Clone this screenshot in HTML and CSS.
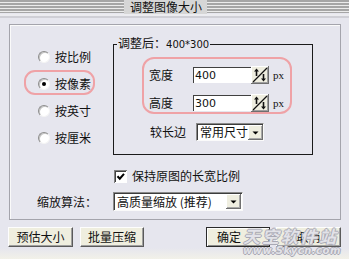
FILE: index.html
```html
<!DOCTYPE html>
<html>
<head>
<meta charset="utf-8">
<link rel="stylesheet" href="styles.css">
</head>
<body>
<div class="titlebar">
  <div class="stripes left"></div>
  <div class="title">调整图像大小</div>
  <div class="stripes right"></div>
</div>
<div class="band"></div>
<div class="group">
  <div class="units">
    <div class="radio"><span class="dot"></span>按比例</div>
    <div class="radio hl"><span class="dot on"></span>按像素</div>
    <div class="radio"><span class="dot"></span>按英寸</div>
    <div class="radio"><span class="dot"></span>按厘米</div>
  </div>
  <fieldset class="resize">
    <legend>调整后：<span class="num">400*300</span></legend>
    <div class="ring">
      <div class="field">
        <span class="lbl">宽度</span><span class="input">400</span>
        <svg class="spin" viewBox="0 0 18 18" width="18" height="18"><rect x="0" y="0" width="18" height="18" fill="#6f6f6f"/><rect x="0" y="0" width="17" height="17" fill="#fff"/><rect x="1" y="1" width="16" height="16" fill="#a0a0a0"/><rect x="1" y="1" width="15" height="15" fill="#efeee0"/><path d="M2 16L16 2" stroke="#111" stroke-width="1.3"/><path d="M5.5 10V4.5" stroke="#111" stroke-width="1.6"/><path d="M3 5.5L5.5 2.5 8 5.5z" fill="#111"/><path d="M12.5 8V13.5" stroke="#111" stroke-width="1.6"/><path d="M10 12.5L12.5 15.5 15 12.5z" fill="#111"/></svg>
        <span class="px">px</span>
      </div>
      <div class="field">
        <span class="lbl">高度</span><span class="input">300</span>
        <svg class="spin" viewBox="0 0 18 18" width="18" height="18"><rect x="0" y="0" width="18" height="18" fill="#6f6f6f"/><rect x="0" y="0" width="17" height="17" fill="#fff"/><rect x="1" y="1" width="16" height="16" fill="#a0a0a0"/><rect x="1" y="1" width="15" height="15" fill="#efeee0"/><path d="M2 16L16 2" stroke="#111" stroke-width="1.3"/><path d="M5.5 10V4.5" stroke="#111" stroke-width="1.6"/><path d="M3 5.5L5.5 2.5 8 5.5z" fill="#111"/><path d="M12.5 8V13.5" stroke="#111" stroke-width="1.6"/><path d="M10 12.5L12.5 15.5 15 12.5z" fill="#111"/></svg>
        <span class="px">px</span>
      </div>
    </div>
    <div class="field longside">
      <span class="lbl2">较长边</span>
      <div class="select small"><span class="sel-text">常用尺寸</span>
        <svg class="drop" viewBox="0 0 15 15" width="15" height="15"><rect width="15" height="15" fill="#707070"/><rect width="14" height="14" fill="#fff"/><rect x="1" y="1" width="13" height="13" fill="#a8a8a8"/><rect x="1" y="1" width="12" height="12" fill="#efeee0"/><path d="M4.5 6.5h6l-3 3z" fill="#000"/></svg>
      </div>
    </div>
  </fieldset>
  <div class="check">
    <svg class="box" viewBox="0 0 13 13" width="13" height="13"><rect width="13" height="13" fill="#fff"/><rect width="13" height="1" fill="#808080"/><rect width="1" height="13" fill="#808080"/><rect x="1" y="1" width="11" height="1" fill="#404040"/><rect x="1" y="1" width="1" height="11" fill="#404040"/><path d="M3.5 6.2l2.3 2.5L10 3.8" stroke="#000" stroke-width="2" fill="none"/></svg>
    <span>保持原图的长宽比例</span>
  </div>
  <div class="algo-label">缩放算法：</div>
  <div class="select wide"><span class="sel-text">高质量缩放 (推荐)</span>
    <svg class="drop" viewBox="0 0 15 15" width="15" height="15"><rect width="15" height="15" fill="#707070"/><rect width="14" height="14" fill="#fff"/><rect x="1" y="1" width="13" height="13" fill="#a8a8a8"/><rect x="1" y="1" width="12" height="12" fill="#efeee0"/><path d="M4.5 6.5h6l-3 3z" fill="#000"/></svg>
  </div>
</div>
<div class="actions">
  <div class="btns">
    <button class="btn w65">预估大小</button>
    <button class="btn w64">批量压缩</button>
  </div>
  <div class="btns right">
    <button class="btn w64 default"><span class="ok">确定</span></button>
    <button class="btn w65">取消</button>
  </div>
</div>
<div class="watermark">
  <div class="wm1">天空软件站</div>
  <div class="wm2">www.Skycn.com</div>
</div>
</body>
</html>
```
FILE: styles.css
```css
html, body {
  margin: 0;
  padding: 0;
}
body {
  width: 349px;
  height: 259px;
  overflow: hidden;
  position: relative;
  background: linear-gradient(to bottom, #e6e6ee 0, #e6e6ee 248px, #f2f1e8 259px);
  font-family: "Noto Sans CJK SC", "DejaVu Sans", sans-serif;
  font-size: 12px;
  color: #111;
}
.titlebar {
  display: flex;
  height: 14px;
}
.stripes {
  height: 13px;
  background: repeating-linear-gradient(to bottom, #a6a6a6 0, #a6a6a6 2px, #ececec 2px, #ececec 3px);
}
.stripes.left { width: 124px; }
.stripes.right { flex: 1; }
.title {
  background: #d6d6d6;
  padding: 0 5px 0 6px;
  height: 14px;
  line-height: 14px;
  font-size: 12px;
  color: #111;
}
.band {
  height: 2px;
  background: #ececf0;
  border-bottom: 2px solid #cfcfd6;
}
.group {
  margin: 6px 0 0 9px;
  width: 332px;
  height: 196px;
  box-sizing: border-box;
  border: 1px solid #a4a4ac;
  box-shadow: inset 1px 1px 0 #fafafa;
  padding: 10px 0 10px 0;
  display: grid;
  grid-template-columns: 103px 1fr;
  align-items: start;
}
.units {
  grid-column: 1;
  grid-row: 1;
  padding: 8px 0 0 28px;
  display: flex;
  flex-direction: column;
}
.radio {
  height: 27px;
  display: flex;
  align-items: center;
  gap: 5px;
  position: relative;
  line-height: 14px;
}
.dot {
  width: 12px;
  height: 12px;
  box-sizing: border-box;
  border-radius: 50%;
  background: #fff;
  border: 1px solid;
  border-color: #8c8c8c #f4f4f4 #f4f4f4 #8c8c8c;
  box-shadow: inset 1px 1px 0 #c4c4c4;
  position: relative;
}
.dot.on::after {
  content: "";
  position: absolute;
  left: 3px;
  top: 3px;
  width: 4px;
  height: 4px;
  border-radius: 50%;
  background: #000;
}
.radio.hl::before {
  content: "";
  position: absolute;
  left: -14px;
  top: 0;
  width: 71px;
  height: 25px;
  box-sizing: border-box;
  border: 2px solid #efa2a6;
  border-radius: 11px;
}
.resize {
  grid-column: 2;
  grid-row: 1;
  margin: 0;
  padding: 4px 0 13px 0;
  border: 1px solid #1a1a1a;
  width: 200px;
  box-sizing: border-box;
  min-width: 0;
}
.resize legend {
  padding: 0 1px;
  margin-left: 3px;
  line-height: 16px;
  font-size: 12px;
}
.num {
  font-family: "DejaVu Sans", sans-serif;
  font-size: 10px;
}
.ring {
  margin-left: 28px;
  width: 150px;
  height: 57px;
  box-sizing: border-box;
  border: 2px solid #efa2a6;
  border-radius: 12px;
  padding: 8px 0 1px 5px;
  display: flex;
  flex-direction: column;
  gap: 12px;
}
.field {
  display: flex;
  align-items: center;
  height: 16px;
}
.lbl {
  width: 44px;
  line-height: 14px;
}
.input {
  width: 58px;
  height: 16px;
  box-sizing: border-box;
  background: #fff;
  border-top: 1px solid #404040;
  border-left: 1px solid #404040;
  padding-left: 1px;
  font-family: "DejaVu Sans", sans-serif;
  font-size: 11px;
  line-height: 15px;
}
.spin {
  flex: none;
  display: block;
}
.px {
  margin-left: 4px;
  font-family: "Liberation Serif", serif;
  font-size: 11px;
}
.longside {
  margin: 9px 0 0 36px;
  height: 18px;
}
.lbl2 {
  width: 46px;
  line-height: 14px;
}
.select {
  display: flex;
  align-items: center;
  background: #fff;
  box-sizing: border-box;
  border: 1px solid;
  border-color: #8a8a8a #fafafa #fafafa #8a8a8a;
  box-shadow: inset 1px 1px 0 #3c3c3c;
  padding: 0 1px 0 3px;
}
.sel-text {
  line-height: 14px;
  white-space: nowrap;
}
.drop {
  margin-left: auto;
  flex: none;
  display: block;
}
.select.small {
  width: 68px;
  height: 18px;
}
.check {
  grid-column: 2;
  grid-row: 2;
  margin: 13px 0 0 1px;
  height: 16px;
  display: flex;
  align-items: center;
  gap: 5px;
  line-height: 14px;
}
.box { display: block; flex: none; }
.algo-label {
  grid-column: 1;
  grid-row: 3;
  margin-top: 8px;
  padding-left: 27px;
  height: 19px;
  line-height: 19px;
}
.select.wide {
  grid-column: 2;
  grid-row: 3;
  margin-top: 8px;
  width: 130px;
  height: 19px;
}
.actions {
  display: flex;
  justify-content: space-between;
  padding: 0 8px;
  margin-top: 7px;
}
.btns {
  display: flex;
  gap: 7px;
}
.btns.right { gap: 6px; }
.btn {
  height: 20px;
  margin: 0;
  padding: 0;
  box-sizing: border-box;
  background: #efeedf;
  border: 1px solid;
  border-color: #fdfdfd #5a5a5a #5a5a5a #fdfdfd;
  box-shadow: inset -1px -1px 0 #a0a0a0;
  font-family: "Noto Sans CJK SC", sans-serif;
  font-size: 12px;
  line-height: 16px;
  color: #111;
}
.btn.w65 { width: 65px; }
.btn.w64 { width: 64px; }
.btn.default {
  border-color: #2a2a2a;
  box-shadow: inset 1px 1px 0 #fff, inset -1px -1px 0 #8a8a8a;
  text-align: left;
  padding-left: 10px;
}
.watermark {
  position: absolute;
  left: 243px;
  top: 226px;
  width: 98px;
  font-style: italic;
  font-weight: bold;
  color: rgba(246, 246, 250, 0.75);
  text-shadow: 1px 0 0 #a9a9b4, -1px 0 0 #a9a9b4, 0 1px 0 #a9a9b4, 0 -1px 0 #a9a9b4;
  pointer-events: none;
}
.wm1 {
  font-size: 17px;
  line-height: 19px;
  letter-spacing: 2px;
}
.wm2 {
  font-family: "DejaVu Sans", sans-serif;
  font-size: 10px;
  line-height: 12px;
  letter-spacing: 0.5px;
}
```
